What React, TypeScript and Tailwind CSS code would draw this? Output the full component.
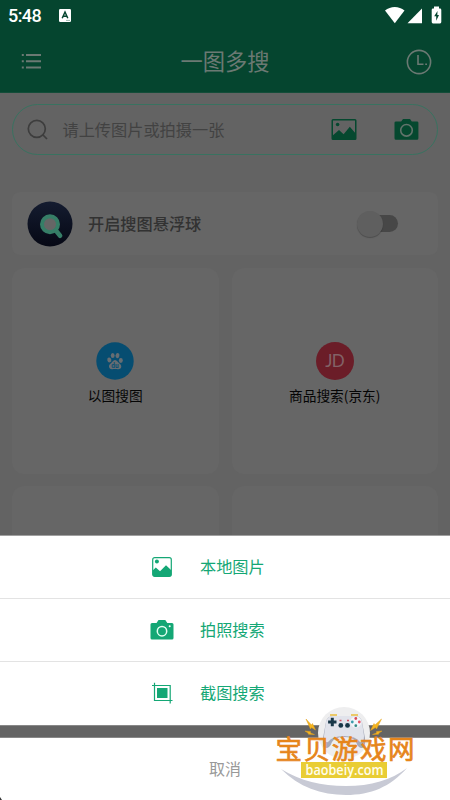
import type { ReactNode } from "react";

const cjk = "font-['Noto_Sans_CJK_SC',sans-serif]";

function StatusBar() {
  return (
    <div className="flex h-[31px] items-center pl-2 pr-[8px] text-white">
      <span className="w-[33px] whitespace-nowrap font-[Roboto,sans-serif] text-[18px] font-medium leading-[31px] tracking-[-0.6px]">5:48</span>
      <svg className="ml-[18px]" width="12" height="13" viewBox="0 0 12 13">
        <rect width="12" height="13" rx="1.2" fill="#fff" />
        <path d="M3.2 9.2 6 3l2.8 6.2M4.2 7.3h3.6" fill="none" stroke="#05452f" strokeWidth="1.5" />
        <path d="M7 11.4h4" stroke="#84a79a" strokeWidth=".8" />
      </svg>
      <svg className="-mt-[2px] ml-auto" width="58" height="18" viewBox="0 0 58 18" fill="#fff">
        <path d="M1 4.500C6.500-.2 15-.2 20.500 4.500L10.800 17.200Z" />
        <path d="M23.500 17.200H38V2.500Z" />
        <path fillRule="evenodd" d="M50 .6h5v2h1q1.300 0 1.300 1.300v12.200q0 1.300-1.300 1.300h-7q-1.300 0-1.300-1.300V3.900Q47.700 2.600 49 2.600h1ZM53.500 5 50.200 10.200h2V14.800L55 9h-1.700Z" />
      </svg>
    </div>
  );
}

function Header() {
  return (
    <header className="h-[93px] shrink-0 border-b border-[#134d39] bg-[#05452f]">
      <StatusBar />
      <div className="flex h-[61px] items-center justify-between pl-[21px] pr-[18px] text-[#6b7973]">
        <svg width="21" height="18" viewBox="0 0 21 18" fill="none" stroke="currentColor" strokeWidth="2">
          <path d="M5 2h15M5 8.300h15M5 14.600h15M.8 2h2M.8 8.300h2M.8 14.600h2" />
        </svg>
        <h1 className={`${cjk} -mt-[3px] pl-[2px] text-[22.300px] leading-8`}>一图多搜</h1>
        <svg width="26" height="26" viewBox="0 0 26 26" fill="none" stroke="currentColor">
          <circle cx="13" cy="13" r="11.600" strokeWidth="1.600" />
          <path d="M12 6v9.200h5.500M19.200 15.200h1.800" strokeWidth="1.600" />
        </svg>
      </div>
    </header>
  );
}

function SearchBox() {
  return (
    <div className="flex h-[51px] items-center rounded-full border border-[#397260] pl-[14px] pr-[18px]">
      <svg width="22" height="22" viewBox="0 0 22 22" fill="none" stroke="#3d3d3d" strokeWidth="1.700">
        <circle cx="9.800" cy="9.800" r="8.500" />
        <path d="m16 16 4 4" />
      </svg>
      <span className={`${cjk} ml-[13.500px] text-[16.200px] text-[#424242]`}>请上传图片或拍摄一张</span>
      <svg className="ml-auto" width="26" height="21" viewBox="0 0 26 21">
        <path fillRule="evenodd" fill="#05482f" d="M2 0h22q1.500 0 1.500 1.500v18Q25.500 21 24 21H2Q.5 21 .5 19.500v-18Q.5 0 2 0Zm0 1.500v14.700l6-5.200 4.600 4.300 6.200-7.500 5.200 6V1.500Z" />
        <circle cx="6.600" cy="5.500" r="1.800" fill="#05482f" />
      </svg>
      <svg className="ml-[37px]" width="25" height="21" viewBox="0 0 25 21">
        <path fill="#05482f" d="M2 2.400h5.200L9 0h7l1.800 2.400H23q1.400 0 1.400 1.400v15.500q0 1.500-1.400 1.500H2q-1.500 0-1.500-1.500V3.800Q.5 2.400 2 2.400Z" />
        <circle cx="12.500" cy="11.300" r="5.800" fill="none" stroke="#62736b" strokeWidth="1.600" />
      </svg>
    </div>
  );
}

function FloatingBallCard() {
  return (
    <div className="mt-[37px] flex h-[63px] items-center rounded-[8px] bg-[#666666] pl-[15px] pr-[40px]">
      <svg width="46" height="46" viewBox="0 0 46 46">
        <defs>
          <linearGradient id="ball" x1="0" y1="0" x2="0" y2="1">
            <stop offset="0" stopColor="#141c30" />
            <stop offset="1" stopColor="#060814" />
          </linearGradient>
        </defs>
        <circle cx="23" cy="23" r="22.500" fill="url(#ball)" />
        <path d="m28.500 29 4.600 5.700" stroke="#367e67" strokeWidth="4.600" strokeLinecap="round" />
        <circle cx="23" cy="23.300" r="8" fill="#666" stroke="#367e67" strokeWidth="4" />
      </svg>
      <span className={`${cjk} ml-[15px] text-[16.200px] font-medium text-[#323232]`}>开启搜图悬浮球</span>
      <div className="ml-auto flex h-[17px] w-[38px] items-center rounded-full bg-[#474747]">
        <div className="-ml-[3px] h-[26px] w-[26px] rounded-full bg-[#5f5f5f] shadow-[0_1px_1px_rgba(0,0,0,0.25)]" />
      </div>
    </div>
  );
}

function SearchCard({ icon, label }: { icon: ReactNode; label: string }) {
  return (
    <div className="flex h-[206px] flex-col items-center rounded-[12px] bg-[#666666] pt-[74px]">
      {icon}
      <span className={`${cjk} mt-[4px] whitespace-nowrap text-[13.700px] leading-[22px] text-[#050505]`}>{label}</span>
    </div>
  );
}

const baiduIcon = (
  <svg width="38" height="38" viewBox="0 0 38 38">
    <circle cx="19" cy="19" r="18.700" fill="#064d71" />
    <g fill="#666d72">
      <ellipse cx="13.300" cy="17.900" rx="2" ry="2.500" transform="rotate(-15 13.300 17.900)" />
      <ellipse cx="16.700" cy="13.500" rx="1.900" ry="2.600" />
      <ellipse cx="21.500" cy="13.600" rx="1.900" ry="2.600" transform="rotate(12 21.500 13.600)" />
      <ellipse cx="24.800" cy="18.500" rx="2" ry="2.400" />
      <path d="M19 18c-2 0-2.800 2.400-4.900 4.100-2.300 2-.8 5.600 2.200 5.200 1.900-.3 3.500-.3 5.400 0 3.300.5 4.900-3 2.300-5.200C22 20.400 21 18 19 18Z" />
    </g>
    <text x="19" y="26" textAnchor="middle" fontFamily="Roboto, sans-serif" fontSize="6.500" fontWeight="700" fill="#075074">du</text>
  </svg>
);

const jdIcon = (
  <div className="flex h-[38px] w-[38px] items-center justify-center rounded-full bg-[#6b1d28] font-[Lato,sans-serif] text-[17px] tracking-[-0.500px] text-[#826267]">JD</div>
);

const galleryIcon = (
  <svg width="24" height="22" viewBox="0 0 24 22">
    <rect x="2.700" y="1.700" width="18.600" height="18.600" rx="2" fill="#fff" stroke="#14a775" strokeWidth="1.200" />
    <path d="M2.700 14.400 5.800 11.600 10 15.200 16 9.300l5.300 4.900v4.500q0 1.500-1.600 1.500H4.300q-1.600 0-1.600-1.500Z" fill="#14a775" />
    <circle cx="6.900" cy="5.600" r="2" fill="#14a775" />
  </svg>
);

const cameraIcon = (
  <svg width="24" height="22" viewBox="0 0 24 22">
    <path d="M2 4h4.500L8.500 1h6.800l2 3H22q1.500 0 1.500 1.500v13.600q0 1.500-1.500 1.500H2q-1.500 0-1.500-1.500V5.500Q.5 4 2 4Z" fill="#14a775" />
    <circle cx="12" cy="12.200" r="4.700" fill="none" stroke="#e2fff1" strokeWidth="1.500" />
    <circle cx="19.700" cy="7.300" r="1" fill="#fff" />
  </svg>
);

const cropIcon = (
  <svg width="24" height="22" viewBox="0 0 24 22">
    <path d="M2 3.500h18.200v18M4.500.8v17.700h18" fill="none" stroke="#14a775" strokeWidth="1.200" />
    <path d="M7 6h10.500v10H7Z" fill="#14a775" />
  </svg>
);

function SheetRow({ icon, label }: { icon: ReactNode; label: string }) {
  return (
    <button className="flex h-[63px] w-full items-center border-b border-[#e3e3e3] pb-px pl-[150px] last:border-b-0">
      {icon}
      <span className={`${cjk} -mt-px ml-[26px] text-[16.200px] text-[#14a775]`}>{label}</span>
    </button>
  );
}

function ActionSheet() {
  return (
    <div className="absolute inset-x-0 bottom-0">
      <div className="h-[190px] border-t border-[#a0a0a0] bg-white">
        <SheetRow icon={galleryIcon} label="本地图片" />
        <SheetRow icon={cameraIcon} label="拍照搜索" />
        <SheetRow icon={cropIcon} label="截图搜索" />
      </div>
      <div className="h-[13px] border-y border-[#888888] bg-[#646464]" />
      <button className={`${cjk} block h-[62px] w-full bg-white pb-[3px] text-center text-[16px] text-[#999999]`}>取消</button>
    </div>
  );
}

function Watermark() {
  return (
    <svg className="absolute left-[270px] top-[700px]" width="160" height="100" viewBox="0 0 160 100">
      <circle cx="74" cy="33" r="26" fill="#eeeeef" />
      <path d="M11 69C31 81 51 86 76 86s45-6 61-18C120 87 101 95 76 95S29 87 11 69Z" fill="#c8cad5" />
      <g fill="#f5b51f" stroke="#e3a01c" strokeWidth=".5">
        <path d="m36 19 5.500 6 1-1.500L45.500 30l-4-2.500-1 1.500Z" />
        <path d="m111.500 19-6.500 6-1-1.500-3.500 7 5-3 1 1.500Z" />
        <path d="m35 31 5.500.5v1.500l4 1.500-6-.2-.5-1.300ZM112 31l-5.500.5v1.500l-4 1.500 6-.2.500-1.300Z" />
      </g>
      <path d="M63 16q-6 0-7 6l-3 16q-1 10 3 10 4 0 6-6 3-5 12-5t12 5q2 6 6 6 4 0 3-10l-3-16q-1-6-7-6Z" fill="#a6aab9" />
      <path d="M63 16q-6 0-7 6l-2 14q0 7 4 6 4-6 16-6t16 6q4 1 4-6l-2-14q-1-6-7-6Z" fill="#e1e3eb" />
      <path d="M60 15h7M81 15h7" stroke="#eabd3d" strokeWidth="1.500" />
      <path d="M62.300 17.800v8.400M58.100 22h8.400" stroke="#183748" strokeWidth="3" />
      <g fill="#183748"><circle cx="70.800" cy="25.400" r="2.400" /><circle cx="77.500" cy="25.400" r="2.400" /></g>
      <path d="M69.500 20.500h2M77 20.500h2" stroke="#d65262" strokeWidth="1.600" />
      <circle cx="85.800" cy="22" r="5.500" fill="#f3f5fa" />
      <circle cx="85.800" cy="18.500" r="1.400" fill="#d84b5a" />
      <circle cx="85.800" cy="25.700" r="1.400" fill="#358b86" />
      <circle cx="82.300" cy="22" r="1.400" fill="#3a9cac" />
      <circle cx="89.300" cy="22" r="1.400" fill="#e65264" />
      <text x="5.500" y="58.500" textLength="139" fontFamily="Noto Sans CJK SC, sans-serif" fontSize="26.500" fontWeight="400" fill="#e6851b" stroke="#e6851b" strokeWidth=".65">宝贝游戏网</text>
      <rect x="31" y="62" width="86" height="16" fill="#e9cd35" />
      <text x="35.500" y="74.500" textLength="78" lengthAdjust="spacingAndGlyphs" fontFamily="Open Sans, sans-serif" fontSize="14" fontWeight="600" fill="#fffdec">baobeiy.com</text>
    </svg>
  );
}

export default function App() {
  return (
    <div className="relative flex h-[800px] w-[450px] flex-col overflow-hidden bg-[#636363]">
      <Header />
      <main className="px-3 pt-[11px]">
        <SearchBox />
        <FloatingBallCard />
        <div className="mt-[13px] grid grid-cols-2 gap-x-[13px] gap-y-[12px]">
          <SearchCard icon={baiduIcon} label="以图搜图" />
          <SearchCard icon={jdIcon} label="商品搜索(京东)" />
          <div className="h-[206px] rounded-[12px] bg-[#666666]" />
          <div className="h-[206px] rounded-[12px] bg-[#666666]" />
        </div>
      </main>
      <ActionSheet />
      <Watermark />
      <svg className="absolute bottom-0 left-0" width="3" height="3" viewBox="0 0 3 3">
        <path d="M0 0 2 3H0Z" fill="#333" />
      </svg>
    </div>
  );
}
